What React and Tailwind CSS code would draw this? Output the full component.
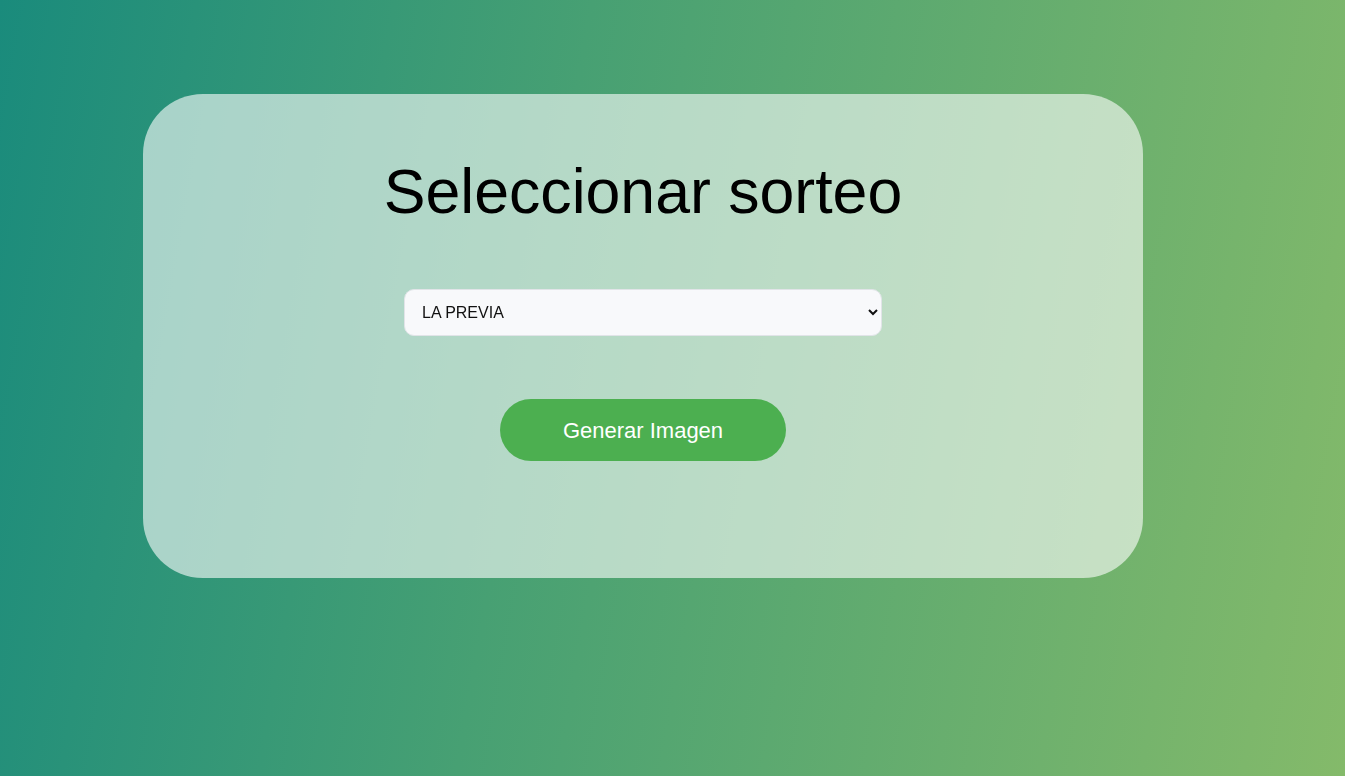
export default function App() {
  return (
    <div
      className="min-h-[776px] w-full pt-[94px] pl-[143px]"
      style={{ fontFamily: '"Liberation Sans", Arial, sans-serif' }}
    >
      <div className="fixed inset-0 -z-10 bg-[linear-gradient(100deg,#1a8b7c_0%,#47a073_40%,#84ba6a_100%)]" />
      <div className="w-[1000px] h-[484px] rounded-[60px] bg-white/60 flex flex-col items-center pt-[59px]">
        <h1 className="text-[62.6px] leading-[71px] text-black mt-[3px]">Seleccionar sorteo</h1>
        <select
          defaultValue="LA PREVIA"
          className="mt-[62px] w-[478px] h-[47px] rounded-[10px] border border-[#e1e4e8] bg-[#f8f9fb] pl-[13px] pr-2 text-[16px] text-[#111]"
        >
          <option>LA PREVIA</option>
        </select>
        <button className="mt-[63px] w-[286px] h-[62px] rounded-full bg-[#4caf50] text-white text-[22px]">
          Generar Imagen
        </button>
      </div>
    </div>
  );
}
